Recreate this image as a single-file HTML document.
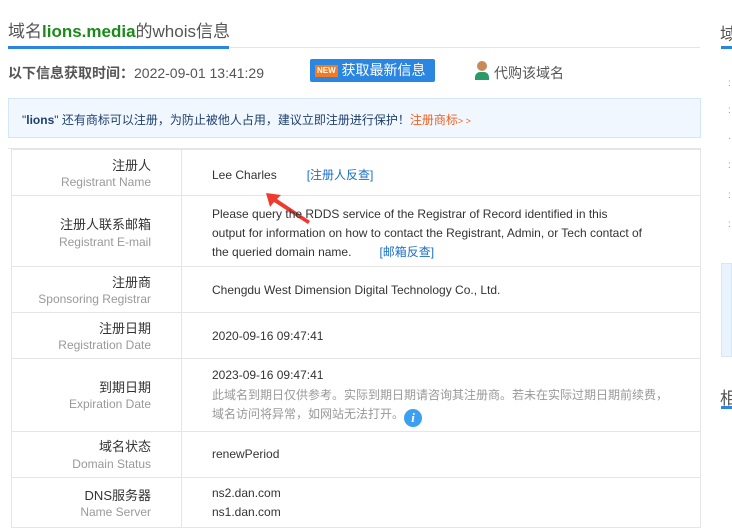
<!DOCTYPE html>
<html><head><meta charset="utf-8"><style>
*{margin:0;padding:0;box-sizing:border-box}
body{width:732px;height:530px;overflow:hidden;background:#fff;font-family:"Liberation Sans","Noto Sans CJK SC",sans-serif;position:relative;color:#333}
.a{position:absolute;white-space:nowrap}
.l1{font-size:13px;color:#333;text-align:right;width:140px;left:11px}
.l2{font-size:12px;color:#999;text-align:right;width:140px;left:11px}
.v{font-size:12px;color:#333;left:212px}
.hl{position:absolute;left:11px;width:690px;height:1px;background:#e5e5e5}
.lk{color:#1a6fc9}
</style></head><body>
<div class="a" style="left:8px;top:17px;font-size:17px;color:#555">域名<b style="color:#1a8a1a">lions.media</b>的whois信息</div>
<div class="a" style="left:8px;top:47px;width:692px;height:1px;background:#e5e5e5"></div>
<div class="a" style="left:8px;top:46px;width:221px;height:3px;background:#2a86e0"></div>
<div class="a" style="left:720px;top:20px;font-size:17px;color:#555">域</div>
<div class="a" style="left:721px;top:46px;width:11px;height:3px;background:#2a86e0"></div>
<div class="a" style="left:8px;top:63px;font-size:14px;color:#555"><b>以下信息获取时间：</b>2022-09-01 13:41:29</div>
<div class="a" style="left:310px;top:59px;width:125px;height:23px;background:#2a86e0;border-radius:2px;color:#fff;font-size:14px;line-height:23px;padding-left:5px"><span style="display:inline-block;background:#f47920;font-size:8px;font-weight:bold;line-height:12px;padding:0 2px;vertical-align:2px">NEW</span> 获取最新信息</div>
<div class="a" style="left:475px;top:61px;width:14px;height:19px"><div style="width:10px;height:10px;border-radius:50%;background:#c98a5a;margin-left:2px"></div><div style="width:14px;height:8px;background:#2a9a6a;border-radius:5px 5px 0 0;margin-top:1px"></div></div>
<div class="a" style="left:494px;top:63px;font-size:14px;color:#555">代购该域名</div>
<div class="a" style="left:8px;top:98px;width:693px;height:40px;background:#f0f7fe;border:1px solid #d3e7fb"></div>
<div class="a" style="left:22px;top:111px;font-size:12px;color:#1f3f6f">"<b>lions</b>" 还有商标可以注册，为防止被他人占用，建议立即注册进行保护！<span style="color:#f06020">注册商标</span><span style="color:#f06020;font-size:9px">&gt; &gt;</span></div>
<div class="a" style="left:8px;top:148px;width:693px;height:1px;background:#e5e5e5"></div>
<div class="a" style="left:11px;top:149px;width:690px;height:379px;border:1px solid #e5e5e5"></div>
<div class="a" style="left:181px;top:149px;width:1px;height:379px;background:#e5e5e5"></div>
<div class="hl" style="top:195px"></div><div class="hl" style="top:266px"></div><div class="hl" style="top:312px"></div><div class="hl" style="top:358px"></div><div class="hl" style="top:431px"></div><div class="hl" style="top:477px"></div>
<div class="a l1" style="top:155px">注册人</div><div class="a l2" style="top:175px">Registrant Name</div>
<div class="a v" style="top:166px">Lee Charles<span class="lk" style="margin-left:30px">[注册人反查]</span></div>
<svg class="a" style="left:262px;top:190px" width="50" height="35"><path d="M4 3 L8 17 L12 12 L46 34 L48 31 L15 9 L19 5 Z" fill="#f03a30"/></svg>
<div class="a l1" style="top:214px">注册人联系邮箱</div><div class="a l2" style="top:235px">Registrant E-mail</div>
<div class="a v" style="top:205px;line-height:19px;white-space:normal;width:432px">Please query the RDDS service of the Registrar of Record identified in this output for information on how to contact the Registrant, Admin, or Tech contact of the queried domain name.<span class="lk" style="margin-left:28px">[邮箱反查]</span></div>
<div class="a l1" style="top:272px">注册商</div><div class="a l2" style="top:292px">Sponsoring Registrar</div>
<div class="a v" style="top:283px">Chengdu West Dimension Digital Technology Co., Ltd.</div>
<div class="a l1" style="top:318px">注册日期</div><div class="a l2" style="top:338px">Registration Date</div>
<div class="a v" style="top:329px">2020-09-16 09:47:41</div>
<div class="a l1" style="top:377px">到期日期</div><div class="a l2" style="top:397px">Expiration Date</div>
<div class="a v" style="top:368px">2023-09-16 09:47:41</div>
<div class="a v" style="top:386px;color:#999;line-height:19px">此域名到期日仅供参考。实际到期日期请咨询其注册商。若未在实际过期日期前续费，<br>域名访问将异常，如网站无法打开。<span style="display:inline-block;width:18px;height:18px;border-radius:50%;background:#3ca0f0;color:#fff;font:italic bold 13px 'Liberation Serif',serif;text-align:center;line-height:18px;vertical-align:-4px">i</span></div>
<div class="a l1" style="top:436px">域名状态</div><div class="a l2" style="top:457px">Domain Status</div>
<div class="a v" style="top:447px">renewPeriod</div>
<div class="a l1" style="top:485px">DNS服务器</div><div class="a l2" style="top:505px">Name Server</div>
<div class="a v" style="top:486px">ns2.dan.com</div><div class="a v" style="top:505px">ns1.dan.com</div>
<div class="a" style="left:721px;top:263px;width:11px;height:94px;background:#e8f3fd;border:1px solid #d3e7fb"></div>
<div class="a" style="left:720px;top:384px;font-size:17px;color:#555">相</div>
<div class="a" style="left:721px;top:406px;width:11px;height:3px;background:#2a86e0"></div>
<div class="a" style="left:728px;top:78px;font-size:10px;color:#999">:</div>
<div class="a" style="left:728px;top:105px;font-size:10px;color:#999">:</div>
<div class="a" style="left:728px;top:133px;font-size:10px;color:#999">·</div>
<div class="a" style="left:728px;top:160px;font-size:10px;color:#999">:</div>
<div class="a" style="left:728px;top:190px;font-size:10px;color:#999">:</div>
<div class="a" style="left:728px;top:219px;font-size:10px;color:#999">:</div>
</body></html>
